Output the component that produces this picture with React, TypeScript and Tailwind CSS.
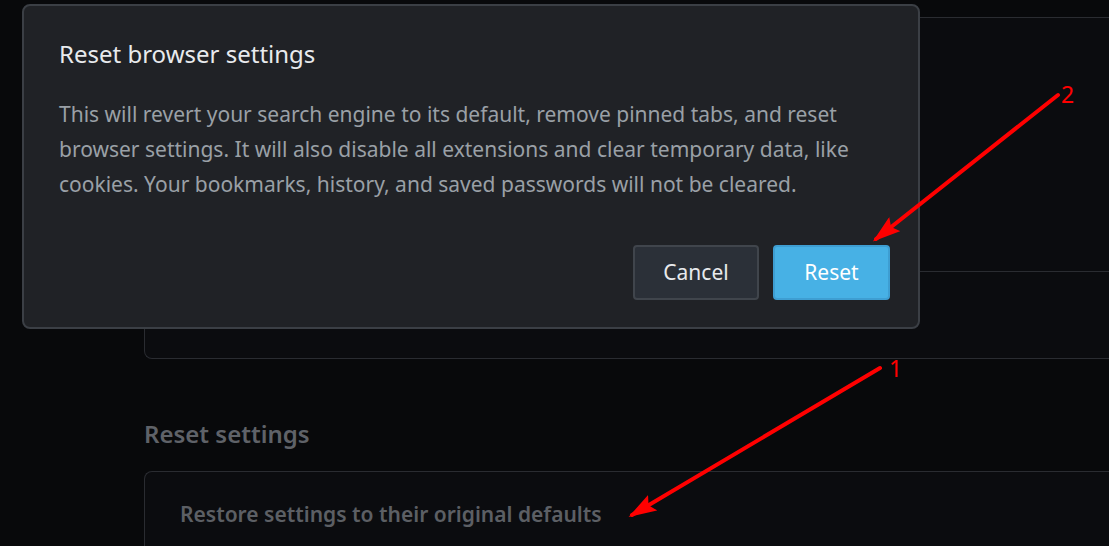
import React from "react";

const font = { fontFamily: '"Noto Sans", "Open Sans", sans-serif' };

function Annotations() {
  return (
    <svg className="absolute inset-0 pointer-events-none" width="1109" height="546" viewBox="0 0 1109 546">
      <defs>
        <marker id="head" markerWidth="7" markerHeight="4.5" refX="6" refY="2.25" orient="auto" markerUnits="strokeWidth">
          <path d="M0,0 L7,2.25 L0,4.5 L1.2,2.25 Z" fill="#ff0000" />
        </marker>
      </defs>
      <line x1="1058" y1="95" x2="876" y2="239" stroke="#ff0000" strokeWidth="4" strokeLinecap="round" markerEnd="url(#head)" />
      <line x1="880" y1="368" x2="632" y2="515" stroke="#ff0000" strokeWidth="4" strokeLinecap="round" markerEnd="url(#head)" />
    </svg>
  );
}

export default function App() {
  return (
    <div className="relative w-[1109px] h-[546px] overflow-hidden bg-[#08090b]" style={font}>
      {/* settings page behind */}
      <div className="pl-[144px] pt-[17px]">
        <div className="h-[342px] border border-[#2a2c31] rounded-l-lg border-r-0 bg-[#0b0c0f] flex flex-col">
          <div className="h-[254px] border-b border-[#2a2c31]" />
        </div>
        <h2 className="mt-[59px] text-[24px] font-semibold text-[#5f6268] leading-[32px]">Reset settings</h2>
        <div className="mt-[21px] h-[100px] border border-[#2a2c31] rounded-l-lg border-r-0 bg-[#0b0c0f] pl-[35px] pt-[27px]">
          <p className="text-[21px] font-semibold text-[#5c5f64] leading-[30px]">Restore settings to their original defaults</p>
        </div>
      </div>

      {/* dialog */}
      <div className="absolute left-[22px] top-[4px] w-[898px] h-[325px] rounded-lg border-2 border-[#3b3f45] bg-[#202226] pl-[35px] pr-[28px]">
        <h1 className="mt-[31px] text-[24px] leading-[34px] text-[#e8eaed]">Reset browser settings</h1>
        <p className="mt-[26px] text-[21px] leading-[35px] text-[#9aa0a6] whitespace-nowrap">
          This will revert your search engine to its default, remove pinned tabs, and reset
          <br />
          browser settings. It will also disable all extensions and clear temporary data, like
          <br />
          cookies. Your bookmarks, history, and saved passwords will not be cleared.
        </p>
        <div className="mt-[43px] flex justify-end gap-[14px]">
          <button className="w-[126px] h-[55px] rounded-[4px] border-2 border-[#40454c] bg-[#2b3038] text-[21px] text-[#e8eaed]">Cancel</button>
          <button className="w-[117px] h-[55px] rounded-[4px] border-2 border-[#3e9ed2] bg-[#47b1e5] text-[21px] text-white">Reset</button>
        </div>
      </div>

      <Annotations />
      <span className="absolute left-[1061px] top-[80px] text-[23px] leading-[28px] text-[#ff0000]">2</span>
      <span className="absolute left-[889px] top-[354px] text-[23px] leading-[28px] text-[#ff0000]">1</span>
    </div>
  );
}
